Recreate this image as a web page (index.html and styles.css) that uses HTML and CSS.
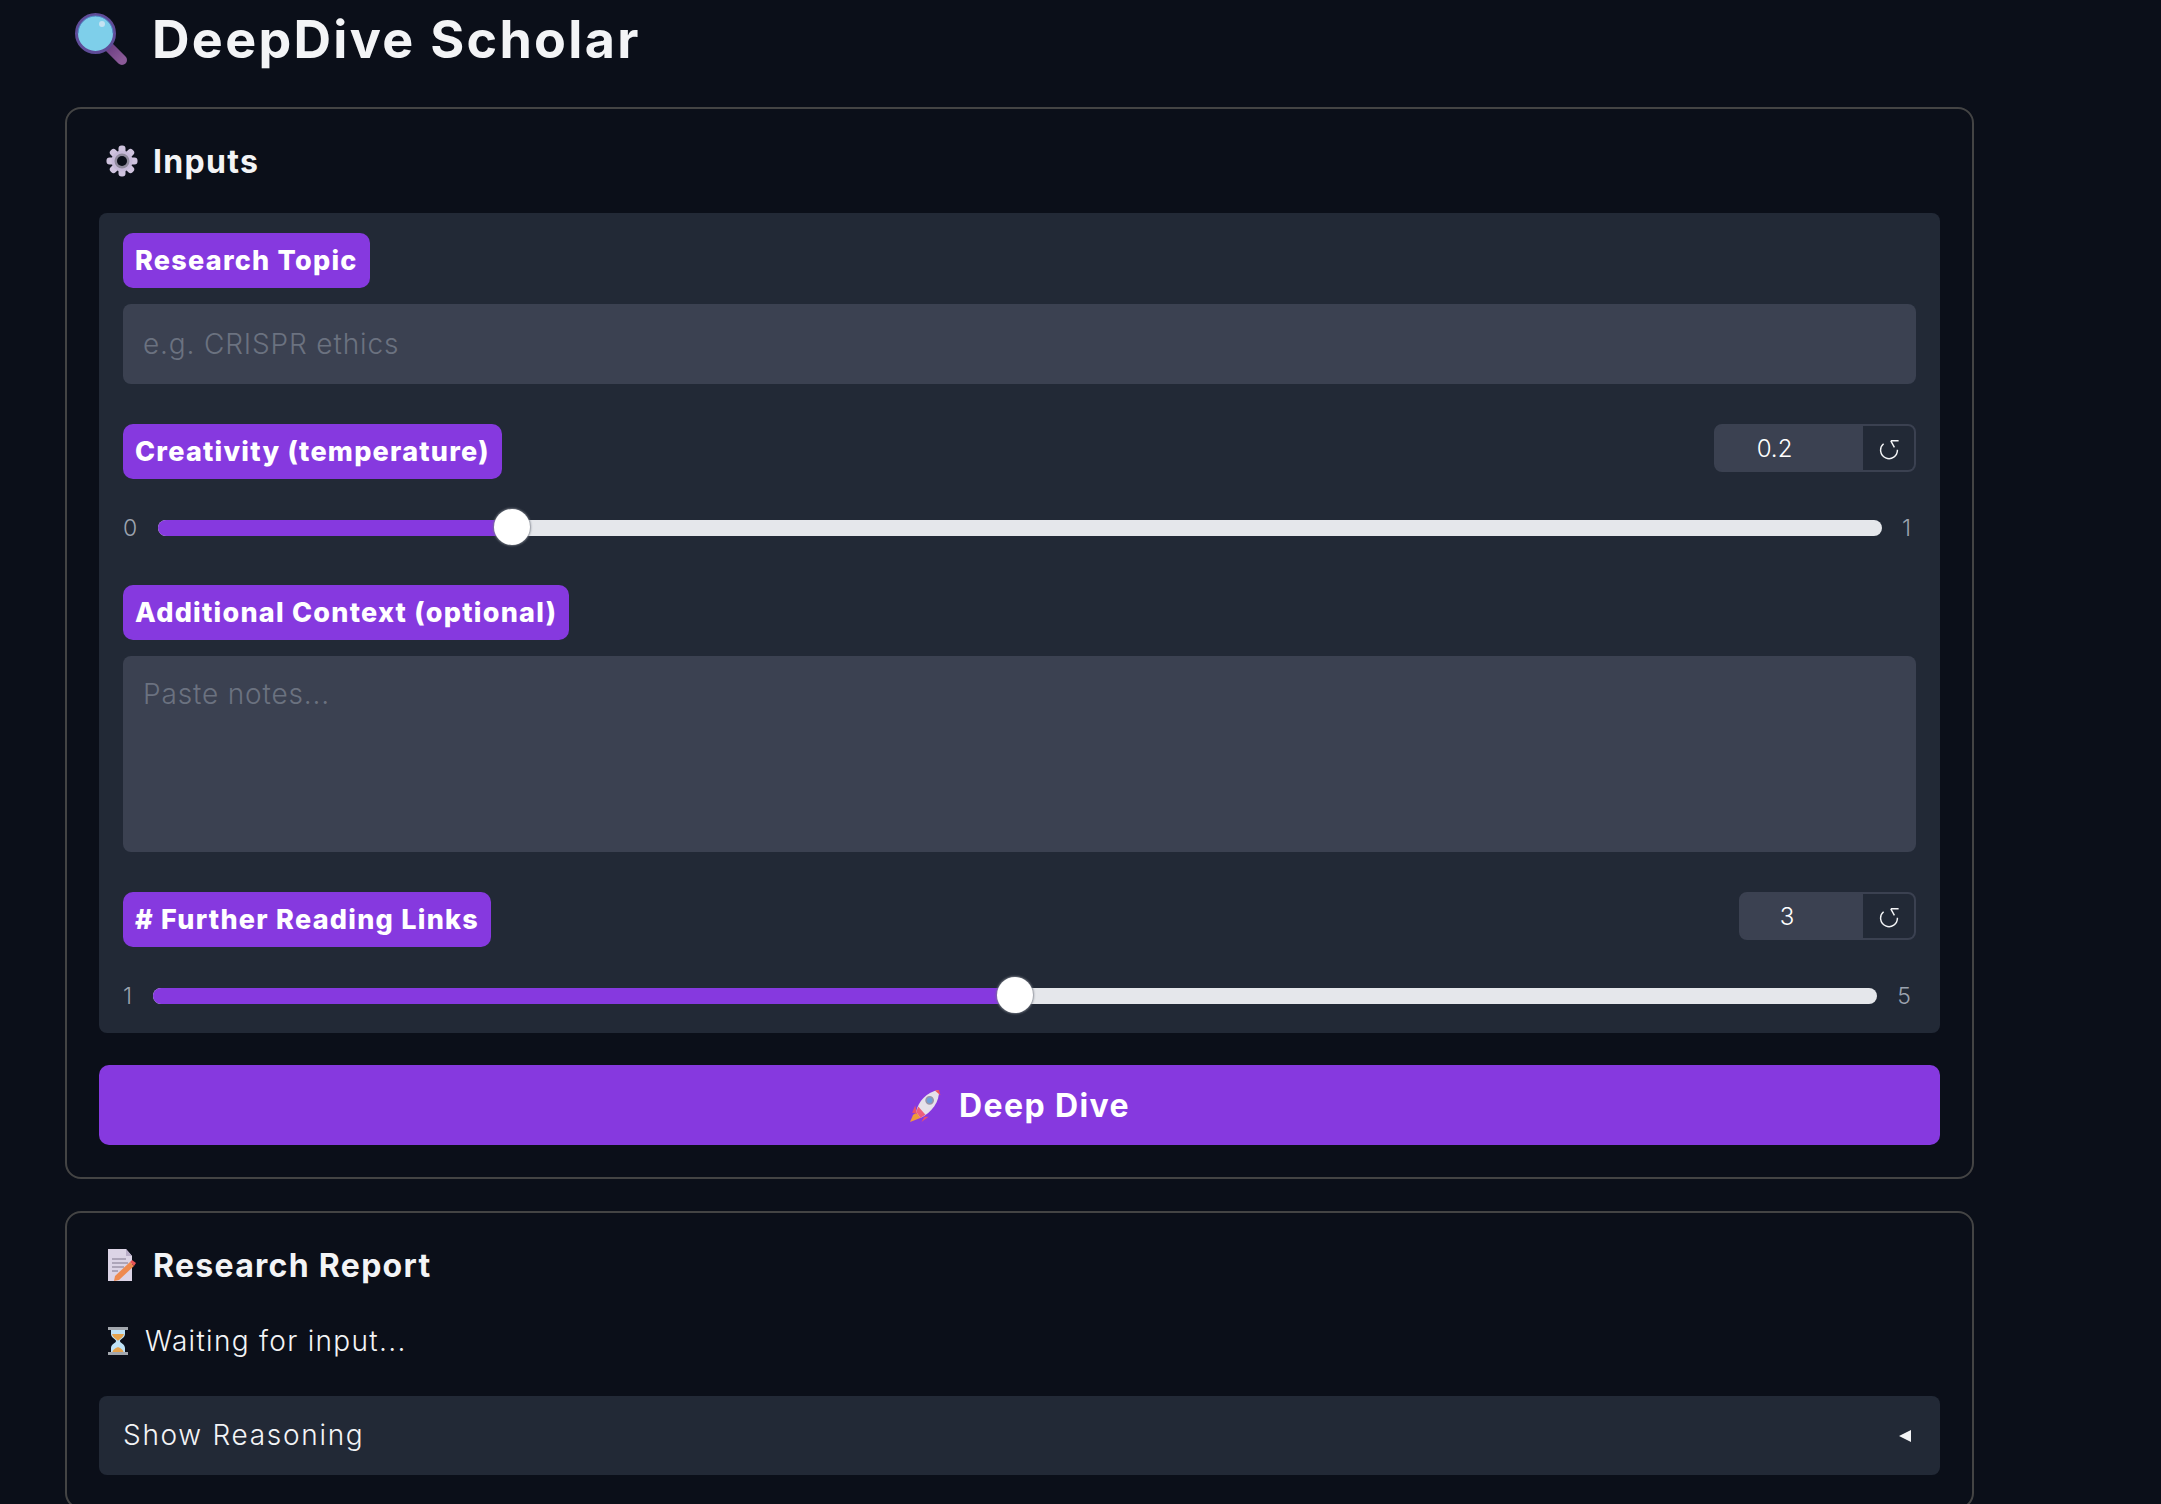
FILE: index.html
```html
<!DOCTYPE html>
<html lang="en">
<head>
    <meta charset="UTF-8">
    <meta name="viewport" content="width=device-width, initial-scale=1.0">
    <title>DeepDive Scholar</title>
    <link rel="stylesheet" href="styles.css">
</head>
<body>
    <div class="app">
        <header class="page-title">
            <svg class="icon-lens" viewBox="0 0 52 52" aria-hidden="true">
                <defs>
                    <linearGradient id="handle" x1="0" y1="0" x2="1" y2="1">
                        <stop offset="0" stop-color="#6d3f83"/>
                        <stop offset="1" stop-color="#8b5a98"/>
                    </linearGradient>
                </defs>
                <path d="M34 34 L47 47" stroke="url(#handle)" stroke-width="10" stroke-linecap="round" fill="none"/>
                <circle cx="20.5" cy="20.5" r="19" fill="#7ecfea" stroke="#5f4c98" stroke-width="3"/>
                <path d="M3 20.5a17.500 17.500 0 0 1 35 0" fill="none" stroke="#4f86c4" stroke-width="1"/>
                <circle cx="27" cy="11" r="3" fill="#c4e2f2"/>
            </svg>
            <h1>DeepDive Scholar</h1>
        </header>

        <section class="card">
            <div class="card-heading">
                <svg class="icon-gear" viewBox="0 0 32 32" aria-hidden="true">
                    <g fill="#cfc3de">
                        <rect x="12.500" y="0.500" width="7" height="31" rx="3"/>
                        <rect x="12.500" y="0.500" width="7" height="31" rx="3" transform="rotate(45 16 16)"/>
                        <rect x="12.500" y="0.500" width="7" height="31" rx="3" transform="rotate(90 16 16)"/>
                        <rect x="12.500" y="0.500" width="7" height="31" rx="3" transform="rotate(135 16 16)"/>
                    </g>
                    <circle cx="16" cy="16" r="10.500" fill="#c6b9d8"/>
                    <circle cx="16" cy="16" r="7.500" fill="#8f8a9c"/>
                    <circle cx="16" cy="16" r="5" fill="#0b0f19"/>
                </svg>
                <h2>Inputs</h2>
            </div>

            <div class="panel">
                <div class="field">
                    <span class="tag">Research Topic</span>
                    <input class="text-box" type="text" placeholder="e.g. CRISPR ethics">
                </div>

                <div class="field field-slider">
                    <div class="slider-head">
                        <span class="tag">Creativity (temperature)</span>
                        <div class="number-box number-wide">
                            <span class="number-value">0.2</span>
                            <span class="number-reset">
                                <svg viewBox="0 0 20 20" aria-hidden="true">
                                    <path d="M5.500 6.500 A7 7 0 1 0 17 11.500 M11.500 4 H18 M11.500 4 L14.500 9.500" fill="none" stroke="#f3f4f6" stroke-width="1.200"/>
                                </svg>
                            </span>
                        </div>
                    </div>
                    <div class="slider-row">
                        <span class="slider-end">0</span>
                        <div class="track">
                            <div class="track-fill" style="width: 20.5%"></div>
                        </div>
                        <span class="slider-end">1</span>
                    </div>
                </div>

                <div class="field">
                    <span class="tag">Additional Context (optional)</span>
                    <textarea class="text-box text-area" placeholder="Paste notes..."></textarea>
                </div>

                <div class="field field-slider">
                    <div class="slider-head">
                        <span class="tag"># Further Reading Links</span>
                        <div class="number-box number-narrow">
                            <span class="number-value">3</span>
                            <span class="number-reset">
                                <svg viewBox="0 0 20 20" aria-hidden="true">
                                    <path d="M5.500 6.500 A7 7 0 1 0 17 11.500 M11.500 4 H18 M11.500 4 L14.500 9.500" fill="none" stroke="#f3f4f6" stroke-width="1.200"/>
                                </svg>
                            </span>
                        </div>
                    </div>
                    <div class="slider-row">
                        <span class="slider-end">1</span>
                        <div class="track">
                            <div class="track-fill" style="width: 50%"></div>
                        </div>
                        <span class="slider-end">5</span>
                    </div>
                </div>
            </div>

            <button class="go-button" type="button">
                <svg class="icon-rocket" viewBox="0 0 32 32" aria-hidden="true">
                    <path d="M1 32 L4 25 L9 22 L11 28 Z" fill="#ef9a3c"/>
                    <path d="M6 16 L3 23 L8 24 Z" fill="#e84f6e"/>
                    <path d="M15 27 L12 32 L19 27 Z" fill="#e84f6e"/>
                    <path d="M7 22 C9 12 17 3 29 1 C30 12 22 23 11 28 Z" fill="#e6e1ea"/>
                    <path d="M7 22 L11 28 L16 25 L9 17 Z" fill="#ee5f7c"/>
                    <path d="M25 1.500 L29 1 L30.500 6 Z" fill="#ee5358"/>
                    <circle cx="20" cy="11" r="3.500" fill="#6f9fd8" stroke="#9a95a8" stroke-width="1.500"/>
                </svg>
                <span>Deep Dive</span>
            </button>
        </section>

        <section class="card">
            <div class="card-heading">
                <svg class="icon-memo" viewBox="0 0 28 32" aria-hidden="true">
                    <path d="M0 0 H18 L24 7 V32 H0 Z" fill="#dcd4e6"/>
                    <path d="M18 0 L24 7 H18 Z" fill="#b9aec8"/>
                    <path d="M4 10 H18 M4 14 H20 M4 18 H16 M4 22 H10" stroke="#9d95ab" stroke-width="1.300"/>
                    <path d="M7 27 L22 13 L26 17 L11 31 L6 32 Z" fill="#ee8a4f"/>
                    <path d="M22 13 L24 11 L28 14 L26 17 Z" fill="#ea5455"/>
                </svg>
                <h2>Research Report</h2>
            </div>

            <p class="status">
                <svg class="icon-hourglass" viewBox="0 0 20 28" aria-hidden="true">
                    <path d="M3 2 H17 V7 C17 11 12 12 12 14 C12 16 17 17 17 21 V26 H3 V21 C3 17 8 16 8 14 C8 12 3 11 3 7 Z" fill="#bfe2f6"/>
                    <path d="M4 7 H16 C15 11 11 12 10 14 C9 12 5 11 4 7 Z" fill="#e5a24c"/>
                    <path d="M4 26 C5 22 8 21 10 20 C12 21 15 22 16 26 Z" fill="#e5a24c"/>
                    <rect x="0" y="0" width="20" height="3" fill="#a3a7ad"/>
                    <rect x="0" y="25" width="20" height="3" fill="#a3a7ad"/>
                </svg>
                <span>Waiting for input...</span>
            </p>

            <div class="reasoning">
                <span class="reasoning-label">Show Reasoning</span>
                <span class="caret"></span>
            </div>
        </section>
    </div>
</body>
</html>
```

FILE: styles.css
```css
html, body {
    margin: 0;
    padding: 0;
    height: 100%;
    overflow: hidden;
    background-color: #0b0f19;
    color: #f3f4f6;
    font-family: Inter, "Open Sans", sans-serif;
}

.app {
    width: 1909px;
    margin-left: 65px;
}

.page-title {
    display: flex;
    align-items: center;
    gap: 25px;
    height: 78px;
    margin-bottom: 29px;
    padding-left: 10px;
}

.icon-lens {
    width: 52px;
    height: 52px;
}

h1 {
    margin: 0;
    font-size: 52px;
    font-weight: 700;
    letter-spacing: 2.3px;
}

.card {
    border: 2px solid #444444;
    border-radius: 16px;
    padding: 24px 32px 32px;
    margin-bottom: 32px;
}

.card-heading {
    display: flex;
    align-items: center;
    height: 56px;
    margin-bottom: 24px;
    position: relative;
    padding-left: 54px;
}

.card-heading svg {
    position: absolute;
    left: 7px;
}

h2 {
    margin: 0;
    font-size: 32px;
    font-weight: 700;
    letter-spacing: 1.3px;
}

.icon-gear {
    width: 32px;
    height: 32px;
}

.icon-memo {
    width: 28px;
    height: 32px;
    left: 9px !important;
}

.panel {
    background-color: #222936;
    border-radius: 8px;
    padding: 20px 24px 19px;
}

.field {
    display: flex;
    flex-direction: column;
    align-items: flex-start;
    gap: 16px;
    margin-bottom: 40px;
}

.field-slider {
    gap: 0;
    margin-bottom: 39px;
}

.field:last-child {
    margin-bottom: 0;
}

.tag {
    display: inline-block;
    height: 55px;
    line-height: 55px;
    padding: 0 12px;
    background-color: #8639df;
    border-radius: 10px;
    color: #ffffff;
    font-size: 27px;
    font-weight: 800;
    letter-spacing: 1.25px;
    white-space: nowrap;
}

.text-box {
    display: block;
    box-sizing: border-box;
    width: 100%;
    height: 80px;
    padding: 0 20px;
    border: none;
    border-radius: 8px;
    background-color: #3b4151;
    color: #f3f4f6;
    font-family: inherit;
    font-size: 28px;
    font-weight: 300;
    letter-spacing: 0.85px;
    outline: none;
}

.text-box::placeholder {
    color: #6b7280;
    opacity: 1;
}

.text-area {
    height: 196px;
    padding: 21px 20px;
    resize: none;
}

.slider-head {
    display: flex;
    justify-content: space-between;
    align-items: flex-start;
    width: 100%;
}

.number-box {
    display: flex;
    box-sizing: border-box;
    height: 48px;
    background-color: #3b4151;
    border: 2px solid #3b4151;
    border-radius: 8px;
    overflow: hidden;
}

.number-wide {
    width: 202px;
}

.number-narrow {
    width: 177px;
}

.number-value {
    flex: 1;
    padding-right: 30px;
    line-height: 46px;
    text-align: center;
    color: #ffffff;
    font-size: 24px;
    font-weight: 300;
}

.number-reset {
    display: flex;
    align-items: center;
    justify-content: center;
    width: 51px;
    background-color: #222936;
}

.number-reset svg {
    width: 24px;
    height: 24px;
}

.slider-row {
    display: flex;
    align-items: center;
    gap: 20px;
    width: 100%;
    box-sizing: border-box;
    height: 36px;
    margin-top: 31px;
    padding-right: 4px;
}

.slider-end {
    color: #9ca3af;
    font-size: 23px;
    font-weight: 300;
    letter-spacing: 1px;
}

.track {
    flex: 1;
    height: 16px;
    border-radius: 8px;
    background-color: #e5e7eb;
}

.track-fill {
    position: relative;
    height: 100%;
    border-radius: 8px;
    background-color: #8639df;
}

.track-fill::after {
    content: "";
    position: absolute;
    right: -18px;
    top: -11px;
    box-sizing: border-box;
    width: 36px;
    height: 36px;
    border-radius: 50%;
    background-color: #ffffff;
    box-shadow: 0 0 2px 1px rgba(120, 125, 135, 0.8);
}

.go-button {
    display: flex;
    align-items: center;
    justify-content: center;
    gap: 17px;
    width: 100%;
    height: 80px;
    margin-top: 32px;
    border: none;
    border-radius: 10px;
    background-color: #8639df;
    color: #ffffff;
    font-family: inherit;
    font-size: 32px;
    font-weight: 700;
    letter-spacing: 1.4px;
}

.icon-rocket {
    width: 33px;
    height: 33px;
}

.status {
    display: flex;
    align-items: center;
    gap: 17px;
    height: 48px;
    margin: 24px 0 31px;
    padding-left: 9px;
    color: #f3f4f6;
    font-size: 28px;
    font-weight: 300;
    letter-spacing: 1.3px;
}

.icon-hourglass {
    width: 20px;
    height: 28px;
}

.reasoning {
    display: flex;
    align-items: center;
    justify-content: space-between;
    height: 79px;
    padding: 0 29px 0 24px;
    border-radius: 8px;
    background-color: #222936;
    font-size: 28px;
    font-weight: 300;
    letter-spacing: 1.7px;
}

.reasoning-label {
    margin-top: -2px;
}

.caret {
    width: 0;
    height: 0;
    border-top: 6px solid transparent;
    border-bottom: 6px solid transparent;
    border-right: 12px solid #f3f4f6;
}
```
